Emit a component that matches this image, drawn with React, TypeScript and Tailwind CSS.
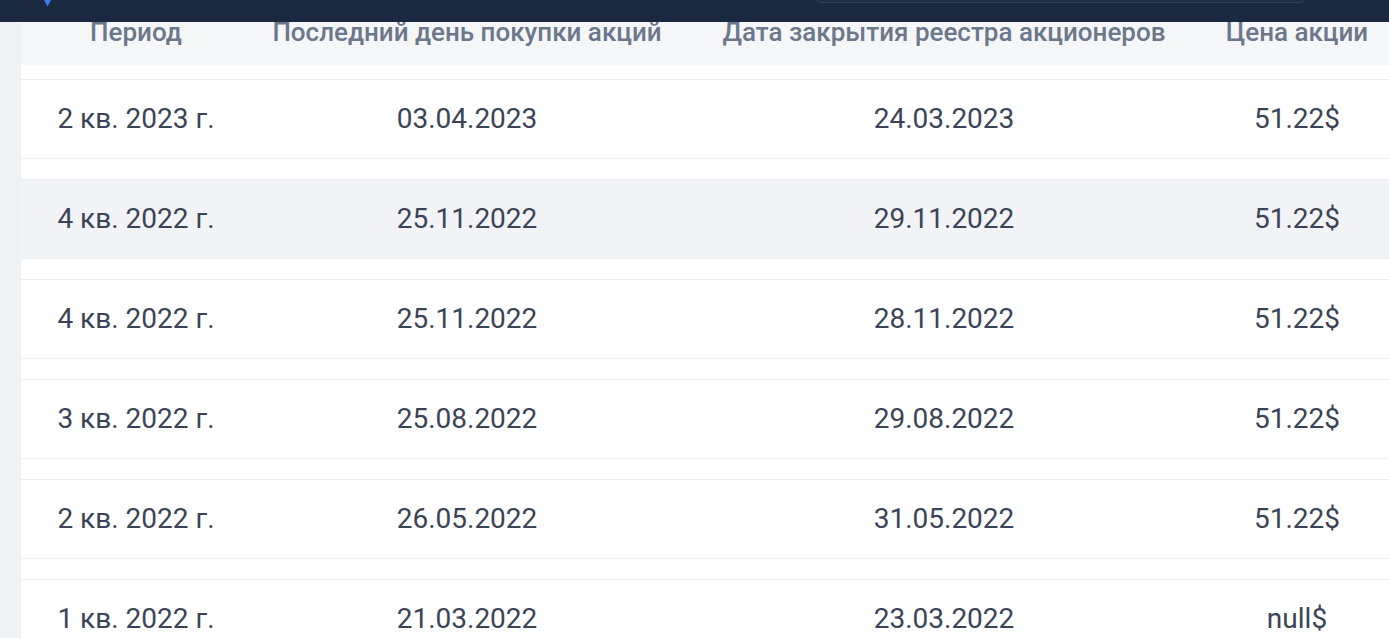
import React from "react";

const rows = [
  { p: "2 кв. 2023 г.", d1: "03.04.2023", d2: "24.03.2023", price: "51.22$", hl: false },
  { p: "4 кв. 2022 г.", d1: "25.11.2022", d2: "29.11.2022", price: "51.22$", hl: true },
  { p: "4 кв. 2022 г.", d1: "25.11.2022", d2: "28.11.2022", price: "51.22$", hl: false },
  { p: "3 кв. 2022 г.", d1: "25.08.2022", d2: "29.08.2022", price: "51.22$", hl: false },
  { p: "2 кв. 2022 г.", d1: "26.05.2022", d2: "31.05.2022", price: "51.22$", hl: false },
  { p: "1 кв. 2022 г.", d1: "21.03.2022", d2: "23.03.2022", price: "null$", hl: false },
];

const cols = "grid grid-cols-[230px_432px_522px_184px]";

export default function App() {
  return (
    <div
      className="relative h-[638px] w-[1389px] overflow-hidden bg-[#eff1f4]"
      style={{ fontFamily: "Roboto, 'Noto Sans', sans-serif" }}
    >
      {/* top nav bar (sticky overlay) */}
      <div className="absolute left-0 top-0 z-10 h-[22px] w-full bg-[#1b2940]">
        <svg className="absolute left-[44px] top-0" width="7" height="7" viewBox="0 0 7 7">
          <path d="M0 0 L7 0 L3.5 6.5 Z" fill="#3d7bf5" />
        </svg>
        <div className="absolute left-[815px] top-[-40px] h-[43px] w-[491px] rounded-md border border-[#34425a] bg-[#1f2d45]" />
      </div>

      <div className="ml-[21px] h-full bg-white">
        {/* header */}
        <div className={`${cols} h-[65px] items-end bg-[#f5f6f8] pb-[19px] text-[26px] font-medium leading-[28px] text-[#6b778b]`}>
          <div className="text-center">Период</div>
          <div className="text-center">Последний день покупки акций</div>
          <div className="text-center">Дата закрытия реестра акционеров</div>
          <div className="text-center">Цена акции</div>
        </div>

        <div className="flex flex-col gap-[20px] pt-[14px]">
          {rows.map((r, i) => (
            <div
              key={i}
              className={`${cols} h-[80px] items-center border-y border-[#eceef2] text-[28px] leading-[32px] text-[#3b4456] ${
                r.hl ? "bg-[#f1f3f6]" : "bg-white"
              }`}
            >
              <div className="text-center">{r.p}</div>
              <div className="text-center">{r.d1}</div>
              <div className="text-center">{r.d2}</div>
              <div className="text-center">{r.price}</div>
            </div>
          ))}
        </div>
      </div>
    </div>
  );
}
